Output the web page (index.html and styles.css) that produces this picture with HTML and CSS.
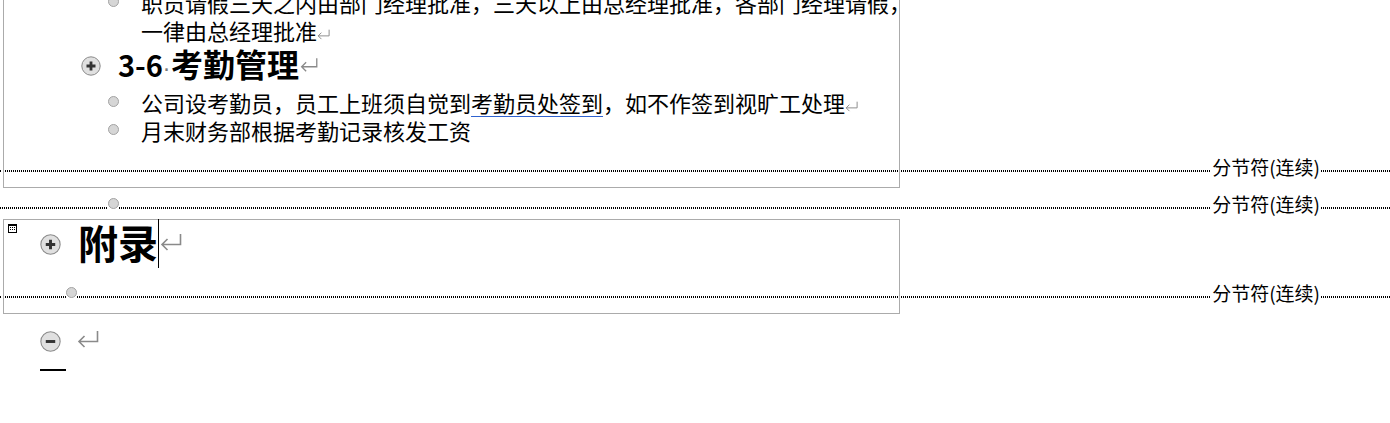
FILE: index.html
```html
<!DOCTYPE html>
<html lang="zh-CN">
<head>
<meta charset="utf-8">
<title>附录</title>
<link rel="stylesheet" href="styles.css">
</head>
<body>
<div class="page">
  <section class="box box-top">
    <div class="li">
      <span class="bul"></span>
      <p class="lt lt-wrap">职员请假三天之内由部门经理批准，三天以上由总经理批准，各部门经理请假，一律由总经理批准<svg class="ret ret-s" viewBox="0 0 22 20"><path d="M20.5 1V11.5H2M7.5 6L2 11.5L7.5 17"/></svg></p>
    </div>
    <div class="h2">
      <svg class="tog tog-s" viewBox="0 0 20 20"><circle cx="10" cy="10" r="9.2"/><path d="M10 5.5v9M5.5 10h9"/></svg>
      <span class="h2t"><span class="num">3-6</span><span class="spc">·</span>考勤管理</span>
      <svg class="ret ret-m" viewBox="0 0 22 20"><path d="M20.5 1V11.5H2M7.5 6L2 11.5L7.5 17"/></svg>
    </div>
    <div class="li">
      <span class="bul"></span>
      <p class="lt">公司设考勤员，员工上班须自觉到<span class="ul">考勤员处签到</span>，如不作签到视旷工处理<svg class="ret ret-s" viewBox="0 0 22 20"><path d="M20.5 1V11.5H2M7.5 6L2 11.5L7.5 17"/></svg></p>
    </div>
    <div class="li">
      <span class="bul"></span>
      <p class="lt">月末财务部根据考勤记录核发工资</p>
    </div>
    <div class="brk brk-in brk-1">
      <span class="d d-edge"></span>
      <span class="d d-inner"></span>
      <span class="d d-fill"></span>
      <span class="lbl">分节符(连续)</span>
      <span class="d d-end"></span>
    </div>
  </section>

  <div class="brk brk-2">
    <span class="d d-lead2"></span>
    <span class="pm"></span>
    <span class="d d-fill"></span>
    <span class="lbl">分节符(连续)</span>
    <span class="d d-end"></span>
  </div>

  <section class="box box-app">
    <div class="h1">
      <svg class="doc-ico" viewBox="0 0 9 9"><rect x="0.5" y="0.5" width="8" height="8"/><path class="solid" d="M0 1.5h9"/><path class="dash" d="M2 3.5h5M2 5.5h5"/></svg>
      <svg class="tog tog-l" viewBox="0 0 20 20"><circle cx="10" cy="10" r="9.2"/><path d="M10 5.5v9M5.5 10h9"/></svg>
      <span class="h1t">附录</span>
      <span class="caret"></span>
      <svg class="ret ret-l" viewBox="0 0 22 20"><path d="M20.5 1V11.5H2M7.5 6L2 11.5L7.5 17"/></svg>
    </div>
    <div class="brk brk-in brk-3">
      <span class="d d-edge"></span>
      <span class="d d-lead3"></span>
      <span class="pm"></span>
      <span class="d d-inner3"></span>
      <span class="d d-fill"></span>
      <span class="lbl">分节符(连续)</span>
      <span class="d d-end"></span>
    </div>
  </section>

  <div class="endpara">
    <svg class="tog tog-l" viewBox="0 0 20 20"><circle cx="10" cy="10" r="9.2"/><path d="M5.5 10h9"/></svg>
    <svg class="ret ret-l" viewBox="0 0 22 20"><path d="M20.5 1V11.5H2M7.5 6L2 11.5L7.5 17"/></svg>
  </div>
  <div class="endmark"></div>
</div>
</body>
</html>
```
FILE: styles.css
```css
html, body {
  margin: 0;
  padding: 0;
  background: #fff;
}
body {
  width: 1390px;
  height: 423px;
  overflow: hidden;
  font-family: "Noto Sans CJK SC", "Noto Sans", sans-serif;
  color: #000;
}
.page {
  display: flex;
  flex-direction: column;
  align-items: flex-start;
}

/* text boundary boxes */
.box {
  margin-left: 3px;
  width: 895px;
  border: 1px solid #ababab;
  display: flex;
  flex-direction: column;
}
.box-top {
  border-top: none;
  margin-top: -12px;
}

/* list items */
.li {
  display: flex;
  align-items: flex-start;
  padding-left: 104px;
}
.bul {
  flex: none;
  width: 9px;
  height: 9px;
  margin-top: 8px;
  border-radius: 50%;
  background: #d6d6d6;
  border: 1px solid #a3a3a3;
}
.lt {
  flex: none;
  margin: 0 0 0 22px;
  font-size: 22px;
  line-height: 28px;
  white-space: nowrap;
}
.lt-wrap {
  width: 774px;
  white-space: normal;
}
.ul {
  text-decoration: underline;
  text-decoration-color: #2f62cf;
  text-decoration-thickness: 1px;
  text-underline-offset: 4px;
}

/* return marks */
.ret {
  fill: none;
  stroke: #8a8a8a;
  stroke-width: 1.6;
  flex: none;
}
.ret-s {
  width: 13px;
  height: 12px;
  vertical-align: -1px;
}
.ret-m {
  width: 18px;
  height: 17px;
  margin-left: 1px;
  margin-top: -2px;
}
.ret-l {
  width: 22px;
  height: 20px;
}

/* collapse toggles */
.tog {
  flex: none;
}
.tog circle {
  fill: #e0e0e0;
  stroke: #8a8a8a;
  stroke-width: 1;
}
.tog path {
  stroke: #333;
  stroke-width: 2.8;
  fill: none;
}
.tog-s {
  width: 20px;
  height: 20px;
}
.tog-l {
  width: 21px;
  height: 21px;
}

/* heading 3-6 */
.h2 {
  display: flex;
  align-items: center;
  height: 44px;
  padding-left: 77px;
}
.h2t {
  margin-left: 17px;
  font-size: 32px;
  font-weight: 700;
  line-height: 44px;
  white-space: nowrap;
}
.num {
  font-size: 29px;
}
.spc {
  font-family: "DejaVu Sans", sans-serif;
  font-weight: 400;
  color: #7a7a7a;
  font-size: 22px;
  margin: 0 1px 0 0;
}

/* heading 附录 */
.h1 {
  display: flex;
  align-items: center;
  height: 48px;
}
.doc-ico {
  flex: none;
  align-self: flex-start;
  width: 9px;
  height: 9px;
  margin: 4px 0 0 4px;
}
.doc-ico rect {
  fill: none;
  stroke: #000;
  stroke-width: 1;
}
.doc-ico .solid {
  stroke: #000;
  stroke-width: 1;
}
.doc-ico .dash {
  stroke: #000;
  stroke-width: 1;
  stroke-dasharray: 1 1;
}
.h1 .tog-l {
  margin-left: 23px;
}
.h1t {
  margin-left: 17px;
  font-size: 40px;
  font-weight: 700;
  line-height: 48px;
  white-space: nowrap;
  position: relative;
  top: -2px;
}
.caret {
  flex: none;
  align-self: flex-start;
  width: 1px;
  height: 49px;
  margin-top: -1px;
  background: #000;
}
.h1 .ret-l {
  margin-left: 1px;
  margin-top: -2px;
}

/* section breaks */
.brk {
  display: flex;
  align-items: flex-start;
  width: 1390px;
  flex: none;
}
.brk-in {
  margin-left: -4px;
}
.brk-1 { padding: 12px 0 10px; }
.brk-2 { padding: 5px 0 5px; }
.brk-3 { padding: 14px 0 10px; }

.d {
  flex: none;
  height: 2px;
  margin-top: 14px;
  background-image: linear-gradient(90deg, #000 1px, transparent 1px);
  background-size: 2px 2px;
  background-repeat: repeat-x;
}
.d-edge { width: 2px; margin-right: 3px; }
.d-inner { width: 893px; margin-right: 3px; }
.d-lead2 { width: 108px; }
.d-lead3 { width: 61px; }
.d-inner3 { width: 821px; margin-right: 3px; }
.d-fill { flex: 1 1 auto; }
.d-end { width: 69px; }
.lbl {
  flex: none;
  font-size: 19px;
  line-height: 20px;
  margin: 1px 1px 0;
  white-space: nowrap;
}
.pm {
  flex: none;
  width: 9px;
  height: 9px;
  margin-top: 5px;
  border-radius: 50%;
  background: #d6d6d6;
  border: 1px solid #a3a3a3;
}

/* final paragraph */
.endpara {
  display: flex;
  align-items: center;
  height: 42px;
  padding: 6px 0 0 40px;
}
.endpara .ret-l {
  margin-left: 16px;
  margin-top: -2px;
}
.endmark {
  margin: 7px 0 0 40px;
  width: 26px;
  height: 2px;
  background: #000;
}
```
